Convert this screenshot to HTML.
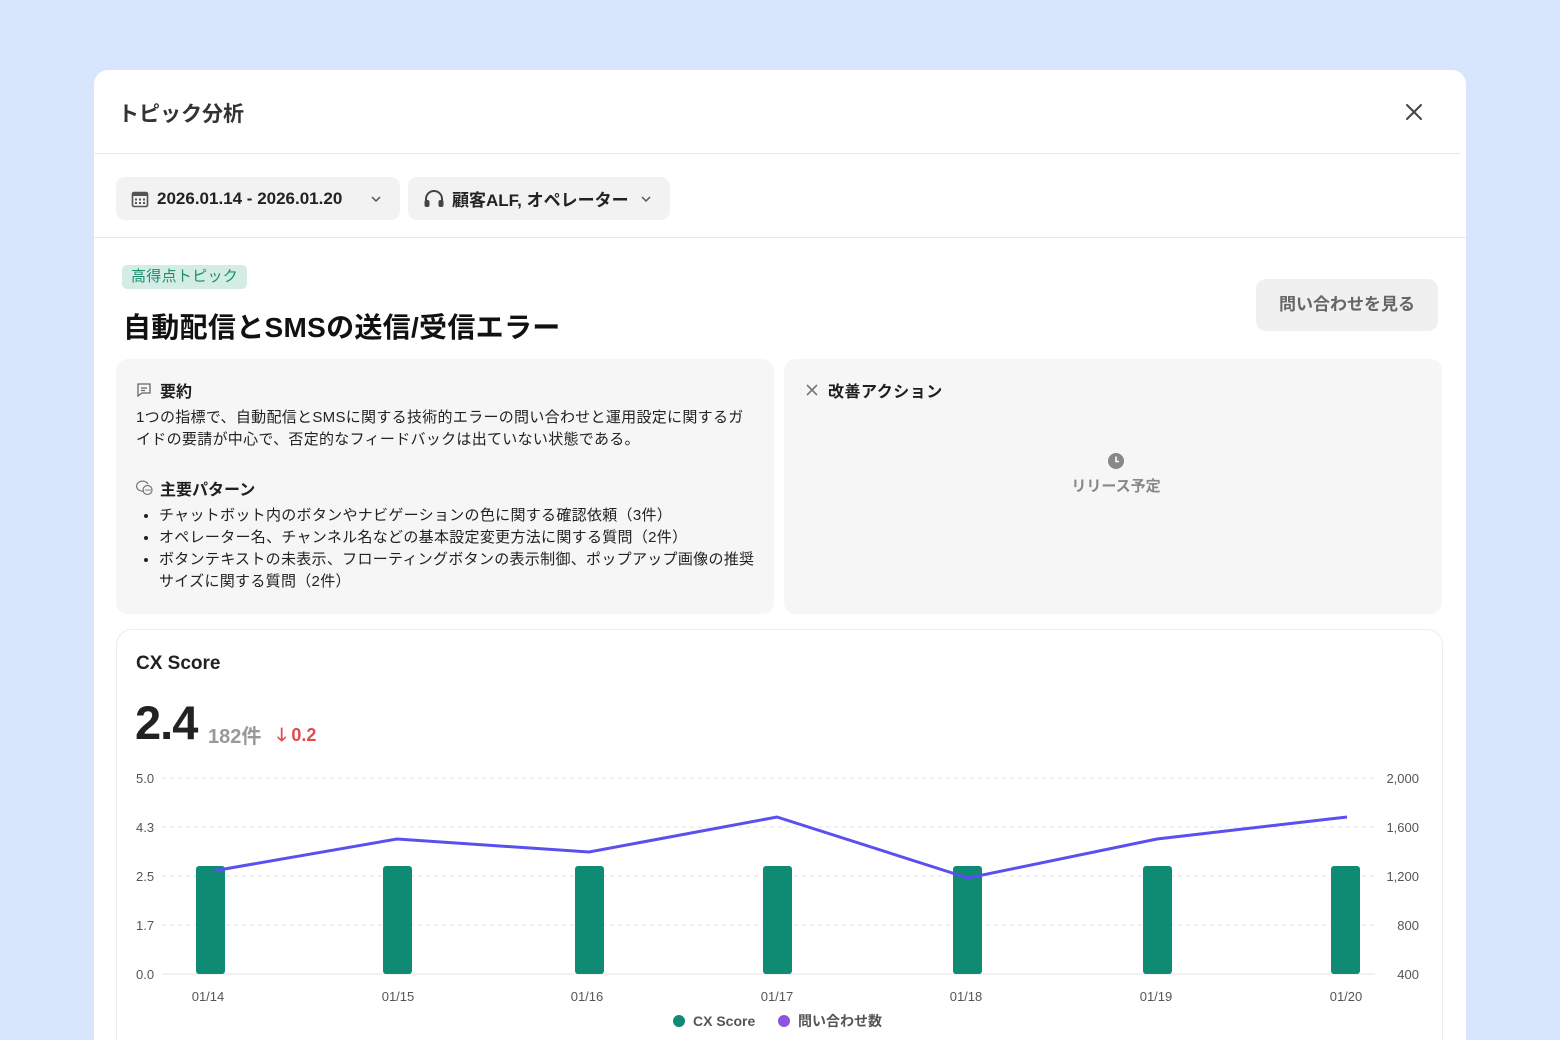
<!DOCTYPE html>
<html><head><meta charset="utf-8"><style>
*{box-sizing:border-box;margin:0;padding:0}
html,body{width:1560px;height:1040px;overflow:hidden}
body{background:#d8e6fd;font-family:"Liberation Sans","Noto Sans CJK JP",sans-serif;color:#1f1f1f;position:relative}
.modal{position:absolute;left:94px;top:70px;width:1372px;height:970px;background:#fff;border-radius:14px 14px 0 0;overflow:hidden}
.abs{position:absolute}
.pill{position:absolute;top:107px;height:43px;background:#f2f2f2;border-radius:9px;font-size:17px;font-weight:bold;display:flex;align-items:center;padding-left:15px;color:#222}
.box{position:absolute;background:#f6f6f6;border-radius:12px}
.t14{font-size:15px;line-height:22px;color:#222;letter-spacing:0.3px}
</style></head><body>
<div class="modal">
<div class="abs" style="left:24px;top:28px;font-size:21px;font-weight:bold;color:#333">トピック分析</div>
<svg class="abs" style="left:1311px;top:33px" width="18" height="18" viewBox="0 0 18 18"><path d="M2 2L16 16M16 2L2 16" stroke="#444" stroke-width="2" stroke-linecap="round"/></svg>
<div class="abs" style="left:0;top:83px;width:1366px;height:1px;background:#e8e8e8"></div>
<div class="pill" style="left:22px;width:284px">
<svg width="18" height="18" viewBox="0 0 18 18" style="margin-right:8px"><rect x="1.5" y="2.5" width="15" height="14" rx="1.5" fill="none" stroke="#555" stroke-width="1.6"/><rect x="1.5" y="2.5" width="15" height="3.5" fill="#555"/><g fill="#555"><rect x="4" y="8.5" width="2" height="2"/><rect x="8" y="8.5" width="2" height="2"/><rect x="12" y="8.5" width="2" height="2"/><rect x="4" y="12" width="2" height="2"/><rect x="8" y="12" width="2" height="2"/><rect x="12" y="12" width="2" height="2"/></g></svg>
2026.01.14 - 2026.01.20
<svg width="12" height="8" viewBox="0 0 12 8" style="margin-left:28px"><path d="M2 2L6 6L10 2" stroke="#555" stroke-width="1.5" fill="none"/></svg></div>
<div class="pill" style="left:314px;width:262px">
<svg width="22" height="20" viewBox="0 0 22 20" style="margin-right:7px"><path d="M3 14V10A8 8 0 0 1 19 10V14" fill="none" stroke="#444" stroke-width="2"/><rect x="1.5" y="11" width="5" height="7" rx="2" fill="#444"/><rect x="15.5" y="11" width="5" height="7" rx="2" fill="#444"/></svg>
顧客ALF, オペレーター
<svg width="12" height="8" viewBox="0 0 12 8" style="margin-left:11px"><path d="M2 2L6 6L10 2" stroke="#555" stroke-width="1.5" fill="none"/></svg></div>
<div class="abs" style="left:0;top:167px;width:1372px;height:1px;background:#e8e8e8"></div>
<div class="abs" style="left:28px;top:195px;height:24px;padding:0 9px;background:#d3ede5;border-radius:5px;color:#1b8e70;font-size:15px;line-height:24px;letter-spacing:0.3px">高得点トピック</div>
<div class="abs" style="left:29px;top:236px;font-size:28px;font-weight:bold;color:#111;letter-spacing:0.3px">自動配信とSMSの送信/受信エラー</div>
<div class="abs" style="left:1162px;top:209px;width:182px;height:52px;background:#f0f0f0;border-radius:10px;font-size:17px;font-weight:bold;color:#666;line-height:52px;text-align:center">問い合わせを見る</div>

<div class="box" style="left:22px;top:289px;width:658px;height:255px">
<div class="abs" style="left:20px;top:19px;font-size:16px;font-weight:bold;display:flex;align-items:center"><svg width="16" height="16" viewBox="0 0 16 16" style="margin-right:8px"><path d="M2 2H14V11H6L2 14Z" fill="none" stroke="#666" stroke-width="1.3"/><path d="M5 6H11M5 8.5H9" stroke="#666" stroke-width="1.2"/></svg>要約</div>
<div class="abs t14" style="left:20px;top:48px;width:618px">1つの指標で、自動配信とSMSに関する技術的エラーの問い合わせと運用設定に関するガイドの要請が中心で、否定的なフィードバックは出ていない状態である。</div>
<div class="abs" style="left:20px;top:117px;font-size:16px;font-weight:bold;display:flex;align-items:center"><svg width="18" height="16" viewBox="0 0 18 16" style="margin-right:6px"><path d="M8 11A6 5 0 1 1 12 4" fill="none" stroke="#777" stroke-width="1.2"/><circle cx="11.5" cy="10" r="4.5" fill="none" stroke="#777" stroke-width="1.2"/><circle cx="10" cy="10" r=".8" fill="#777"/><circle cx="12" cy="10" r=".8" fill="#777"/><circle cx="14" cy="10" r=".8" fill="#777"/></svg>主要パターン</div>
<ul class="abs t14" style="left:43px;top:146px;width:600px">
<li>チャットボット内のボタンやナビゲーションの色に関する確認依頼（3件）</li>
<li>オペレーター名、チャンネル名などの基本設定変更方法に関する質問（2件）</li>
<li>ボタンテキストの未表示、フローティングボタンの表示制御、ポップアップ画像の推奨サイズに関する質問（2件）</li></ul>
</div>
<div class="box" style="left:690px;top:289px;width:658px;height:255px">
<div class="abs" style="left:20px;top:19px;font-size:16px;font-weight:bold;display:flex;align-items:center;letter-spacing:0.5px"><svg width="16" height="16" viewBox="0 0 16 16" style="margin-right:8px"><path d="M3 3L13 13M13 3L3 13" stroke="#777" stroke-width="1.6"/></svg>改善アクション</div>
<svg class="abs" style="left:323px;top:93px" width="18" height="18" viewBox="0 0 18 18"><circle cx="9" cy="9" r="8" fill="#888"/><path d="M9 4.5V9.5H12" stroke="#fff" stroke-width="1.6" fill="none"/></svg>
<div class="abs" style="left:0;top:116px;width:664px;text-align:center;font-size:15px;font-weight:bold;color:#888">リリース予定</div>
</div>

<div class="abs" style="left:22px;top:559px;width:1327px;height:430px;border:1px solid #ececec;border-radius:16px"></div>
<div class="abs" style="left:42px;top:583px;font-size:19px;font-weight:bold;color:#222">CX Score</div>
<div class="abs" style="left:41px;top:625px;font-size:47px;font-weight:bold;color:#222;letter-spacing:-1px">2.4</div>
<div class="abs" style="left:114px;top:650px;font-size:20px;font-weight:bold;color:#999">182件</div>
<div class="abs" style="left:183px;top:653px;font-size:18px;font-weight:bold;color:#e5484d">🡓 0.2</div>
</div>
<svg class="abs" style="left:0;top:760px" width="1560" height="280">
<g stroke="#e3e3e3" stroke-dasharray="4 4"><line x1="162" y1="18" x2="1375" y2="18"/><line x1="162" y1="67" x2="1375" y2="67"/><line x1="162" y1="116" x2="1375" y2="116"/><line x1="162" y1="165" x2="1375" y2="165"/></g>
<line x1="162" y1="214" x2="1375" y2="214" stroke="#e6e6e6"/>
<g font-size="13" fill="#555" font-family="Liberation Sans,sans-serif"><text x="136" y="23">5.0</text><text x="136" y="72">4.3</text><text x="136" y="121">2.5</text><text x="136" y="170">1.7</text><text x="136" y="219">0.0</text>
<g text-anchor="end"><text x="1419" y="23">2,000</text><text x="1419" y="72">1,600</text><text x="1419" y="121">1,200</text><text x="1419" y="170">800</text><text x="1419" y="219">400</text></g>
<g text-anchor="middle"><text x="208" y="241">01/14</text><text x="398" y="241">01/15</text><text x="587" y="241">01/16</text><text x="777" y="241">01/17</text><text x="966" y="241">01/18</text><text x="1156" y="241">01/19</text><text x="1346" y="241">01/20</text></g></g>
<g fill="#0f8b73"><rect x="196" y="106" width="29" height="108" rx="3"/><rect x="383" y="106" width="29" height="108" rx="3"/><rect x="575" y="106" width="29" height="108" rx="3"/><rect x="763" y="106" width="29" height="108" rx="3"/><rect x="953" y="106" width="29" height="108" rx="3"/><rect x="1143" y="106" width="29" height="108" rx="3"/><rect x="1331" y="106" width="29" height="108" rx="3"/></g>
<polyline points="213,111 397,79 589,92 777,57 968,118 1157,79 1347,57" fill="none" stroke="#5b4ff0" stroke-width="3"/>
<circle cx="679" cy="261" r="6" fill="#0f8b73"/><text x="693" y="266" font-size="14" font-weight="bold" fill="#555" font-family="Liberation Sans,sans-serif">CX Score</text>
<circle cx="784" cy="261" r="6" fill="#8b55e0"/><text x="798" y="266" font-size="14" font-weight="bold" fill="#555" font-family="Liberation Sans,Noto Sans CJK JP,sans-serif">問い合わせ数</text>
</svg>
</body></html>
